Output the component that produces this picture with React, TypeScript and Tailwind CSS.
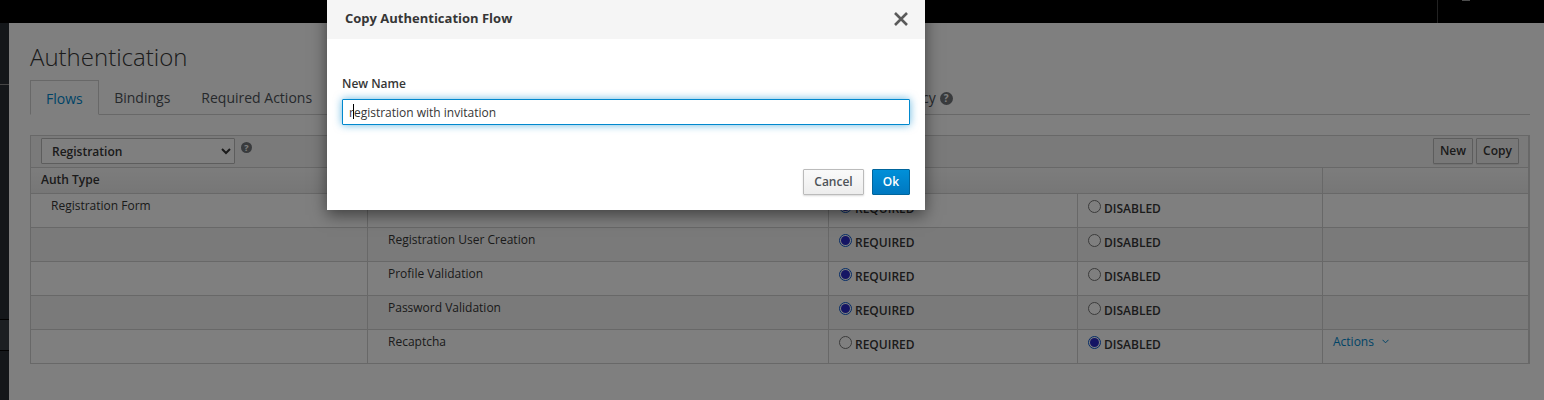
import React from 'react';

const tabs = ['Bindings', 'Required Actions', 'Password Policy', 'OTP Policy', 'WebAuthn Policy', 'WebAuthn Passwordless Policy'];

const rows = [
  { type: 'Registration Form', name: '', required: true, shade: false },
  { type: '', name: 'Registration User Creation', required: true, shade: true },
  { type: '', name: 'Profile Validation', required: true, shade: false },
  { type: '', name: 'Password Validation', required: true, shade: true },
  { type: '', name: 'Recaptcha', required: false, shade: false },
];

const Radio = ({ on }: { on: boolean }) => (
  <span className={`inline-flex h-[13px] w-[13px] shrink-0 items-center justify-center rounded-full border bg-white ${on ? 'border-[#0a58d0]' : 'border-[#767676]'}`}>
    {on && <span className="h-[9px] w-[9px] rounded-full bg-[#2a2ac8]" />}
  </span>
);

const Option = ({ on, label }: { on: boolean; label: string }) => (
  <div className="flex items-start gap-[3px] pl-[10px] pt-[6px]">
    <Radio on={on} />
    <span className="text-[12px] font-semibold leading-[17px] text-[#363636]">{label}</span>
  </div>
);

const Help = ({ big }: { big?: boolean }) => (
  <span className={`inline-flex items-center justify-center rounded-full bg-[#72767b] font-bold leading-none text-white ${big ? 'mt-[2px] h-[13px] w-[13px] text-[10px]' : 'h-[11px] w-[11px] text-[9px]'}`}>?</span>
);

export default function App() {
  return (
    <div className="relative h-[400px] w-[1544px] overflow-hidden bg-white font-['Open_Sans',sans-serif] text-[12px] text-[#363636]">
      <div className="h-[23px] bg-black">
        <div className="ml-[1437px] h-[23px] border-l border-[#444]">
          <div className="ml-[24px] h-px w-[8px] bg-[#999]" />
        </div>
      </div>

      <div className="flex h-[377px]">
        <div className="flex w-[9px] shrink-0 flex-col bg-[#292e34]">
          <div className="h-[62px] border-b border-[#8a8a8a]" />
          <div className="mt-[234px] h-[32px] border-y border-black bg-[#393f44]" />
        </div>

        <main className="min-w-0 flex-1 pl-[21px] pr-[14px]">
          <h1 className="mt-[16px] h-[35px] text-[24px] font-light leading-[35px] text-[#363636]">Authentication</h1>

          <div className="mt-[6px] flex h-[35px] border-b border-[#d1d1d1] text-[14px]">
            <div className="h-[35px] border border-b-white border-[#d1d1d1] bg-white px-[15px] leading-[35px] text-[#0088ce]">Flows</div>
            {tabs.map((tab) => (
              <div key={tab} className={`flex h-[34px] items-center gap-[4px] whitespace-nowrap px-[15.5px] leading-[35px] text-[#4d5258] ${tab === 'WebAuthn Passwordless Policy' ? 'ml-[15px]' : ''}`}>
                {tab}
                {tab === 'WebAuthn Passwordless Policy' && <Help big />}
              </div>
            ))}
          </div>

          <div className="mt-[20px] border-r border-[#d1d1d1]">
            <div className="flex h-[33px] items-start border border-[#d1d1d1] bg-[#f5f5f5] pl-[10px] pr-[9px] pt-[2px]">
              <select defaultValue="Registration" className="h-[26px] w-[194px] rounded-[1px] border border-[#bbb] bg-white pl-[6px] text-[12px] font-semibold text-[#363636]">
                <option>Registration</option>
              </select>
              <span className="ml-[6px] mt-[3px] leading-none"><Help /></span>
              <div className="ml-auto flex gap-[3px]">
                <button className="h-[26px] w-[40px] rounded-[1px] border border-[#bbb] bg-[#f1f1f1] text-[12px] font-semibold shadow-[0_1px_1px_rgba(3,3,3,0.08)]">New</button>
                <button className="h-[26px] w-[43px] rounded-[1px] border border-[#bbb] bg-[#f1f1f1] text-[12px] font-semibold shadow-[0_1px_1px_rgba(3,3,3,0.08)]">Copy</button>
              </div>
            </div>

            <div className="flex h-[26px] border-x border-b border-[#d1d1d1] bg-gradient-to-b from-[#fafafa] to-[#ededed] font-semibold leading-[24px]">
              <div className="w-[337px] shrink-0 border-r border-[#d1d1d1] pl-[10px]">Auth Type</div>
              <div className="w-[461px] shrink-0 border-r border-[#d1d1d1] pl-[20px]">Requirement</div>
              <div className="w-[494px] shrink-0 border-r border-[#d1d1d1]" />
              <div className="flex-1" />
            </div>

            {rows.map((row, index) => (
              <div key={index} className={`flex h-[34px] border-x border-b border-[#d1d1d1] ${row.shade ? 'bg-[#f5f5f5]' : 'bg-white'}`}>
                <div className="w-[337px] shrink-0 border-r border-[#d1d1d1] pl-[20px] pt-[3px] leading-[17px]">{row.type}</div>
                <div className="w-[461px] shrink-0 border-r border-[#d1d1d1] pl-[20px] pt-[3px] leading-[17px]">{row.name}</div>
                <div className="w-[249px] shrink-0 border-r border-[#d1d1d1]"><Option on={row.required} label="REQUIRED" /></div>
                <div className="w-[245px] shrink-0 border-r border-[#d1d1d1]"><Option on={!row.required} label="DISABLED" /></div>
                <div className="flex-1 pl-[10px] pt-[3px] leading-[17px]">
                  {row.name === 'Recaptcha' && (
                    <span className="inline-flex items-center gap-[8px] text-[#0088ce]">
                      Actions
                      <svg width="7" height="5" viewBox="0 0 7 5" fill="none" stroke="currentColor" strokeWidth="1"><path d="M0.5 0.8L3.5 3.8L6.5 0.8" /></svg>
                    </span>
                  )}
                </div>
              </div>
            ))}
          </div>
        </main>
      </div>

      <div className="absolute inset-0 bg-black/50" />

      <div className="absolute left-[327px] top-0 h-[210px] w-[598px] bg-white shadow-[0_5px_15px_rgba(0,0,0,0.5)]">
        <div className="flex h-[39px] items-center justify-between bg-[#f5f5f5] pb-[2px] pl-[18px] pr-[16px]">
          <span className="text-[13px] font-bold text-[#363636]">Copy Authentication Flow</span>
          <svg width="16" height="16" viewBox="0 0 16 16" fill="none" stroke="#5a5a5a" strokeWidth="2.6"><path d="M2 2L14 14M14 2L2 14" /></svg>
        </div>
        <div className="px-[15px]">
          <label className="mt-[36px] block text-[12px] font-semibold leading-[17px]">New Name</label>
          <div className="relative mt-[7px] flex h-[26px] items-center rounded-[1px] border border-[#0088ce] bg-white pl-[7px] pt-[2px] text-[12px] text-[#363636] shadow-[0_0_8px_rgba(0,136,206,0.6)]">
            <span className="-ml-px">registration with invitation</span>
            <span className="absolute left-[10px] top-[4px] h-[15px] w-px bg-black" />
          </div>
          <div className="mt-[44px] flex justify-end gap-[8px]">
            <button className="h-[26px] w-[61px] rounded-[1px] border border-[#bbb] bg-gradient-to-b from-[#fafafa] to-[#ededed] text-[12px] font-semibold text-[#4d5258] shadow-[0_1px_2px_rgba(3,3,3,0.15)]">Cancel</button>
            <button className="h-[26px] w-[38px] rounded-[1px] border border-[#00659c] bg-gradient-to-b from-[#0090d9] to-[#0078c0] text-[12px] font-semibold text-white">Ok</button>
          </div>
        </div>
      </div>
    </div>
  );
}
